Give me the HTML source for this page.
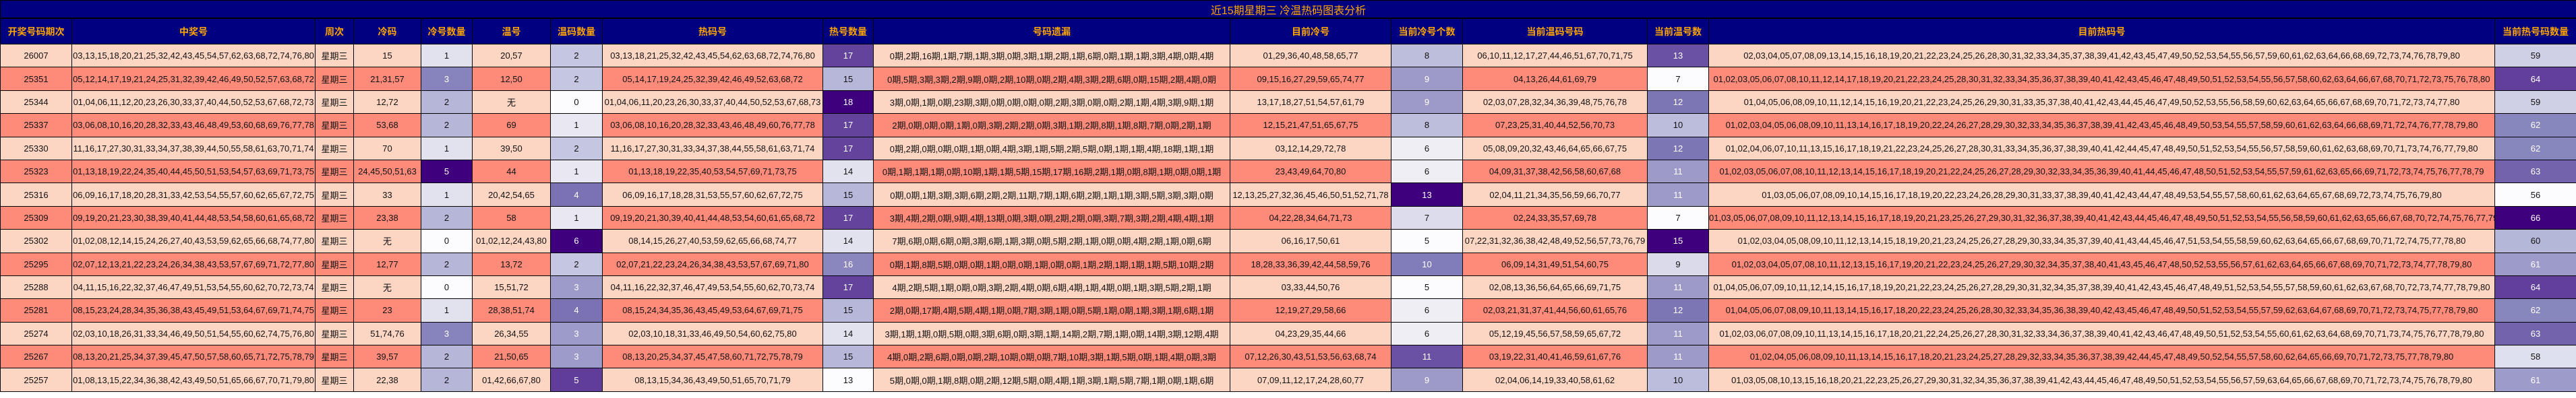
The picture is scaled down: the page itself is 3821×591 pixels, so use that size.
<!DOCTYPE html>
<html><head><meta charset="utf-8">
<style>
html,body{margin:0;padding:0;background:#fff;width:3821px;height:591px;overflow:hidden}
table{border-collapse:collapse;table-layout:fixed;width:3821px;font-family:"Liberation Sans","Noto Sans CJK SC",sans-serif;font-size:13px;color:#111}
td{border:1px solid #000;text-align:center;vertical-align:middle;padding:0;white-space:nowrap;overflow:hidden}
.t td{background:#000080;color:#ffa500;font-size:16px;height:25px;border-bottom:2px solid #000}
.h td{background:#000080;color:#ffa500;font-weight:bold;font-size:14px;height:37px}
tr.r td{height:33.4px}
.a td{background:#fcd5c3}
.b td{background:#fe8a7a}
td.w{color:#fff}
</style></head><body>
<table>
<colgroup>
<col style="width:106px"><col style="width:361px"><col style="width:57px"><col style="width:100px"><col style="width:76px"><col style="width:116px"><col style="width:77px"><col style="width:327px"><col style="width:75px"><col style="width:529px"><col style="width:239px"><col style="width:106px"><col style="width:274px"><col style="width:91px"><col style="width:1166px"><col style="width:121px">
</colgroup>
<tr class="t"><td colspan="16">近15期星期三 冷温热码图表分析</td></tr>
<tr class="h"><td>开奖号码期次</td><td>中奖号</td><td>周次</td><td>冷码</td><td>冷号数量</td><td>温号</td><td>温码数量</td><td>热码号</td><td>热号数量</td><td>号码遗漏</td><td>目前冷号</td><td>当前冷号个数</td><td>当前温码号码</td><td>当前温号数</td><td>目前热码号</td><td>当前热号码数量</td></tr>

<tr class="r a"><td>26007</td><td>03,13,15,18,20,21,25,32,42,43,45,54,57,62,63,68,72,74,76,80</td><td>星期三</td><td>15</td><td style="background:#e2e2ef">1</td><td>20,57</td><td style="background:#c5c6e1">2</td><td>03,13,18,21,25,32,42,43,45,54,62,63,68,72,74,76,80</td><td class="w" style="background:#63439c">17</td><td>0期,2期,16期,1期,7期,1期,3期,0期,3期,1期,2期,1期,6期,0期,1期,1期,3期,4期,0期,4期</td><td>01,29,36,40,48,58,65,77</td><td style="background:#bdbddc">8</td><td>06,10,11,12,17,27,44,46,51,67,70,71,75</td><td class="w" style="background:#6a51a3">13</td><td>02,03,04,05,07,08,09,13,14,15,16,18,19,20,21,22,23,24,25,26,28,30,31,32,33,34,35,37,38,39,41,42,43,45,47,49,50,52,53,54,55,56,57,59,60,61,62,63,64,66,68,69,72,73,74,76,78,79,80</td><td style="background:#cfd0e6">59</td></tr>

<tr class="r b"><td>25351</td><td>05,12,14,17,19,21,24,25,31,32,39,42,46,49,50,52,57,63,68,72</td><td>星期三</td><td>21,31,57</td><td class="w" style="background:#8784bd">3</td><td>12,50</td><td style="background:#c5c6e1">2</td><td>05,14,17,19,24,25,32,39,42,46,49,52,63,68,72</td><td style="background:#b7b7d9">15</td><td>0期,5期,3期,3期,2期,9期,0期,2期,10期,0期,2期,4期,3期,2期,6期,0期,15期,2期,4期,0期</td><td>09,15,16,27,29,59,65,74,77</td><td class="w" style="background:#9e9ac8">9</td><td>04,13,26,44,61,69,79</td><td style="background:#fcfbfd">7</td><td>01,02,03,05,06,07,08,10,11,12,14,17,18,19,20,21,22,23,24,25,28,30,31,32,33,34,35,36,37,38,39,40,41,42,43,45,46,47,48,49,50,51,52,53,54,55,56,57,58,60,62,63,64,66,67,68,70,71,72,73,75,76,78,80</td><td class="w" style="background:#623f9b">64</td></tr>

<tr class="r a"><td>25344</td><td>01,04,06,11,12,20,23,26,30,33,37,40,44,50,52,53,67,68,72,73</td><td>星期三</td><td>12,72</td><td style="background:#b5b6d8">2</td><td>无</td><td style="background:#fcfbfd">0</td><td>01,04,06,11,20,23,26,30,33,37,40,44,50,52,53,67,68,73</td><td class="w" style="background:#3f007d">18</td><td>3期,0期,1期,0期,23期,3期,0期,0期,0期,0期,2期,3期,0期,0期,2期,1期,4期,3期,9期,1期</td><td>13,17,18,27,51,54,57,61,79</td><td class="w" style="background:#9e9ac8">9</td><td>02,03,07,28,32,34,36,39,48,75,76,78</td><td class="w" style="background:#7d76b5">12</td><td>01,04,05,06,08,09,10,11,12,14,15,16,19,20,21,22,23,24,25,26,29,30,31,33,35,37,38,40,41,42,43,44,45,46,47,49,50,52,53,55,56,58,59,60,62,63,64,65,66,67,68,69,70,71,72,73,74,77,80</td><td style="background:#cfd0e6">59</td></tr>

<tr class="r b"><td>25337</td><td>03,06,08,10,16,20,28,32,33,43,46,48,49,53,60,68,69,76,77,78</td><td>星期三</td><td>53,68</td><td style="background:#b5b6d8">2</td><td>69</td><td style="background:#e9e8f2">1</td><td>03,06,08,10,16,20,28,32,33,43,46,48,49,60,76,77,78</td><td class="w" style="background:#63439c">17</td><td>2期,0期,0期,0期,1期,0期,3期,2期,2期,0期,3期,1期,2期,8期,1期,8期,7期,0期,2期,1期</td><td>12,15,21,47,51,65,67,75</td><td style="background:#bdbddc">8</td><td>07,23,25,31,40,44,52,56,70,73</td><td style="background:#bcbddc">10</td><td>01,02,03,04,05,06,08,09,10,11,13,14,16,17,18,19,20,22,24,26,27,28,29,30,32,33,34,35,36,37,38,39,41,42,43,45,46,48,49,50,53,54,55,57,58,59,60,61,62,63,64,66,68,69,71,72,74,76,77,78,79,80</td><td class="w" style="background:#8786bd">62</td></tr>

<tr class="r a"><td>25330</td><td>11,16,17,27,30,31,33,34,37,38,39,44,50,55,58,61,63,70,71,74</td><td>星期三</td><td>70</td><td style="background:#e2e2ef">1</td><td>39,50</td><td style="background:#c5c6e1">2</td><td>11,16,17,27,30,31,33,34,37,38,44,55,58,61,63,71,74</td><td class="w" style="background:#63439c">17</td><td>0期,2期,0期,0期,0期,1期,0期,4期,3期,1期,5期,2期,5期,0期,1期,1期,4期,18期,1期,1期</td><td>03,12,14,29,72,78</td><td style="background:#efeef5">6</td><td>05,08,09,20,32,43,46,64,65,66,67,75</td><td class="w" style="background:#7d76b5">12</td><td>01,02,04,06,07,10,11,13,15,16,17,18,19,21,22,23,24,25,26,27,28,30,31,33,34,35,36,37,38,39,40,41,42,44,45,47,48,49,50,51,52,53,54,55,56,57,58,59,60,61,62,63,68,69,70,71,73,74,76,77,79,80</td><td class="w" style="background:#8786bd">62</td></tr>

<tr class="r b"><td>25323</td><td>01,13,18,19,22,24,35,40,44,45,50,51,53,54,57,63,69,71,73,75</td><td>星期三</td><td>24,45,50,51,63</td><td class="w" style="background:#3f007d">5</td><td>44</td><td style="background:#e9e8f2">1</td><td>01,13,18,19,22,35,40,53,54,57,69,71,73,75</td><td style="background:#e2e2ef">14</td><td>0期,1期,1期,1期,0期,10期,1期,1期,5期,15期,17期,16期,2期,1期,0期,8期,1期,0期,0期,1期</td><td>23,43,49,64,70,80</td><td style="background:#efeef5">6</td><td>04,09,31,37,38,42,56,58,60,67,68</td><td class="w" style="background:#9e9ac8">11</td><td>01,02,03,05,06,07,08,10,11,12,13,14,15,16,17,18,19,20,21,22,24,25,26,27,28,29,30,32,33,34,35,36,39,40,41,44,45,46,47,48,50,51,52,53,54,55,57,59,61,62,63,65,66,69,71,72,73,74,75,76,77,78,79</td><td class="w" style="background:#7263ac">63</td></tr>

<tr class="r a"><td>25316</td><td>06,09,16,17,18,20,28,31,33,42,53,54,55,57,60,62,65,67,72,75</td><td>星期三</td><td>33</td><td style="background:#e2e2ef">1</td><td>20,42,54,65</td><td class="w" style="background:#7a72b3">4</td><td>06,09,16,17,18,28,31,53,55,57,60,62,67,72,75</td><td style="background:#b7b7d9">15</td><td>0期,0期,1期,3期,3期,6期,2期,2期,11期,7期,1期,6期,2期,1期,1期,3期,5期,3期,3期,0期</td><td>12,13,25,27,32,36,45,46,50,51,52,71,78</td><td class="w" style="background:#3f007d">13</td><td>02,04,11,21,34,35,56,59,66,70,77</td><td class="w" style="background:#9e9ac8">11</td><td>01,03,05,06,07,08,09,10,14,15,16,17,18,19,20,22,23,24,26,28,29,30,31,33,37,38,39,40,41,42,43,44,47,48,49,53,54,55,57,58,60,61,62,63,64,65,67,68,69,72,73,74,75,76,79,80</td><td style="background:#fcfbfd">56</td></tr>

<tr class="r b"><td>25309</td><td>09,19,20,21,23,30,38,39,40,41,44,48,53,54,58,60,61,65,68,72</td><td>星期三</td><td>23,38</td><td style="background:#b5b6d8">2</td><td>58</td><td style="background:#e9e8f2">1</td><td>09,19,20,21,30,39,40,41,44,48,53,54,60,61,65,68,72</td><td class="w" style="background:#63439c">17</td><td>3期,4期,2期,0期,9期,4期,13期,0期,3期,0期,2期,2期,0期,3期,7期,3期,2期,4期,4期,1期</td><td>04,22,28,34,64,71,73</td><td style="background:#dcdcec">7</td><td>02,24,33,35,57,69,78</td><td style="background:#fcfbfd">7</td><td>01,03,05,06,07,08,09,10,11,12,13,14,15,16,17,18,19,20,21,23,25,26,27,29,30,31,32,36,37,38,39,40,41,42,43,44,45,46,47,48,49,50,51,52,53,54,55,56,58,59,60,61,62,63,65,66,67,68,70,72,74,75,76,77,79,80</td><td class="w" style="background:#3f007d">66</td></tr>

<tr class="r a"><td>25302</td><td>01,02,08,12,14,15,24,26,27,40,43,53,59,62,65,66,68,74,77,80</td><td>星期三</td><td>无</td><td style="background:#fcfbfd">0</td><td>01,02,12,24,43,80</td><td class="w" style="background:#3f007d">6</td><td>08,14,15,26,27,40,53,59,62,65,66,68,74,77</td><td style="background:#e2e2ef">14</td><td>7期,6期,0期,6期,0期,3期,6期,1期,3期,0期,5期,2期,1期,0期,0期,4期,2期,1期,0期,6期</td><td>06,16,17,50,61</td><td style="background:#fcfbfd">5</td><td>07,22,31,32,36,38,42,48,49,52,56,57,73,76,79</td><td class="w" style="background:#3f007d">15</td><td>01,02,03,04,05,08,09,10,11,12,13,14,15,18,19,20,21,23,24,25,26,27,28,29,30,33,34,35,37,39,40,41,43,44,45,46,47,51,53,54,55,58,59,60,62,63,64,65,66,67,68,69,70,71,72,74,75,77,78,80</td><td style="background:#b5b7d8">60</td></tr>

<tr class="r b"><td>25295</td><td>02,07,12,13,21,22,23,24,26,34,38,43,53,57,67,69,71,72,77,80</td><td>星期三</td><td>12,77</td><td style="background:#b5b6d8">2</td><td>13,72</td><td style="background:#c5c6e1">2</td><td>02,07,21,22,23,24,26,34,38,43,53,57,67,69,71,80</td><td class="w" style="background:#8a87be">16</td><td>0期,1期,8期,5期,0期,0期,1期,0期,0期,1期,0期,0期,1期,2期,1期,1期,1期,5期,10期,2期</td><td>18,28,33,36,39,42,44,58,59,76</td><td class="w" style="background:#807dba">10</td><td>06,09,14,31,49,51,54,60,75</td><td style="background:#dadaeb">9</td><td>01,02,03,04,05,07,08,10,11,12,13,15,16,17,19,20,21,22,23,24,25,26,27,29,30,32,34,35,37,38,40,41,43,45,46,47,48,50,52,53,55,56,57,61,62,63,64,65,66,67,68,69,70,71,72,73,74,77,78,79,80</td><td class="w" style="background:#9c9bc9">61</td></tr>

<tr class="r a"><td>25288</td><td>04,11,15,16,22,32,37,46,47,49,51,53,54,55,60,62,70,72,73,74</td><td>星期三</td><td>无</td><td style="background:#fcfbfd">0</td><td>15,51,72</td><td class="w" style="background:#9d9bc9">3</td><td>04,11,16,22,32,37,46,47,49,53,54,55,60,62,70,73,74</td><td class="w" style="background:#63439c">17</td><td>4期,2期,5期,1期,0期,0期,3期,2期,4期,0期,6期,4期,1期,4期,0期,1期,3期,5期,2期,1期</td><td>03,33,44,50,76</td><td style="background:#fcfbfd">5</td><td>02,08,13,36,56,64,65,66,69,71,75</td><td class="w" style="background:#9e9ac8">11</td><td>01,04,05,06,07,09,10,11,12,14,15,16,17,18,19,20,21,22,23,24,25,26,27,28,29,30,31,32,34,35,37,38,39,40,41,42,43,45,46,47,48,49,51,52,53,54,55,57,58,59,60,61,62,63,67,68,70,72,73,74,77,78,79,80</td><td class="w" style="background:#623f9b">64</td></tr>

<tr class="r b"><td>25281</td><td>08,15,23,24,28,34,35,36,38,43,45,49,51,53,64,67,69,71,74,75</td><td>星期三</td><td>23</td><td style="background:#e2e2ef">1</td><td>28,38,51,74</td><td class="w" style="background:#7a72b3">4</td><td>08,15,24,34,35,36,43,45,49,53,64,67,69,71,75</td><td style="background:#b7b7d9">15</td><td>2期,0期,17期,4期,5期,4期,1期,0期,7期,3期,1期,0期,5期,1期,0期,1期,3期,1期,6期,1期</td><td>12,19,27,29,58,66</td><td style="background:#efeef5">6</td><td>02,03,21,31,37,41,44,56,60,61,65,76</td><td class="w" style="background:#7d76b5">12</td><td>01,04,05,06,07,08,09,10,11,13,14,15,16,17,18,20,22,23,24,25,26,28,30,32,33,34,35,36,38,39,40,42,43,45,46,47,48,49,50,51,52,53,54,55,57,59,62,63,64,67,68,69,70,71,72,73,74,75,77,78,79,80</td><td class="w" style="background:#8786bd">62</td></tr>

<tr class="r a"><td>25274</td><td>02,03,10,18,26,31,33,34,46,49,50,51,54,55,60,62,74,75,76,80</td><td>星期三</td><td>51,74,76</td><td class="w" style="background:#8784bd">3</td><td>26,34,55</td><td class="w" style="background:#9d9bc9">3</td><td>02,03,10,18,31,33,46,49,50,54,60,62,75,80</td><td style="background:#e2e2ef">14</td><td>3期,1期,1期,0期,5期,0期,3期,6期,0期,3期,1期,14期,2期,7期,1期,0期,14期,3期,12期,4期</td><td>04,23,29,35,44,66</td><td style="background:#efeef5">6</td><td>05,12,19,45,56,57,58,59,65,67,72</td><td class="w" style="background:#9e9ac8">11</td><td>01,02,03,06,07,08,09,10,11,13,14,15,16,17,18,20,21,22,24,25,26,27,28,30,31,32,33,34,36,37,38,39,40,41,42,43,46,47,48,49,50,51,52,53,54,55,60,61,62,63,64,68,69,70,71,73,74,75,76,77,78,79,80</td><td class="w" style="background:#7263ac">63</td></tr>

<tr class="r b"><td>25267</td><td>08,13,20,21,25,34,37,39,45,47,50,57,58,60,65,71,72,75,78,79</td><td>星期三</td><td>39,57</td><td style="background:#b5b6d8">2</td><td>21,50,65</td><td class="w" style="background:#9d9bc9">3</td><td>08,13,20,25,34,37,45,47,58,60,71,72,75,78,79</td><td style="background:#b7b7d9">15</td><td>4期,0期,2期,6期,0期,0期,2期,10期,0期,0期,7期,10期,3期,1期,5期,0期,1期,4期,0期,3期</td><td>07,12,26,30,43,51,53,56,63,68,74</td><td class="w" style="background:#6a51a3">11</td><td>03,19,22,31,40,41,46,59,61,67,76</td><td class="w" style="background:#9e9ac8">11</td><td>01,02,04,05,06,08,09,10,11,13,14,15,16,17,18,20,21,23,24,25,27,28,29,32,33,34,35,36,37,38,39,42,44,45,47,48,49,50,52,54,55,57,58,60,62,64,65,66,69,70,71,72,73,75,77,78,79,80</td><td style="background:#dfe0ef">58</td></tr>

<tr class="r a"><td>25257</td><td>01,08,13,15,22,34,36,38,42,43,49,50,51,65,66,67,70,71,79,80</td><td>星期三</td><td>22,38</td><td style="background:#b5b6d8">2</td><td>01,42,66,67,80</td><td class="w" style="background:#5f3d99">5</td><td>08,13,15,34,36,43,49,50,51,65,70,71,79</td><td style="background:#fcfbfd">13</td><td>5期,0期,0期,1期,8期,0期,2期,12期,5期,0期,4期,1期,3期,1期,5期,7期,1期,0期,1期,6期</td><td>07,09,11,12,17,24,28,60,77</td><td class="w" style="background:#9e9ac8">9</td><td>02,04,06,14,19,33,40,58,61,62</td><td style="background:#bcbddc">10</td><td>01,03,05,08,10,13,15,16,18,20,21,22,23,25,26,27,29,30,31,32,34,35,36,37,38,39,41,42,43,44,45,46,47,48,49,50,51,52,53,54,55,56,57,59,63,64,65,66,67,68,69,70,71,72,73,74,75,76,78,79,80</td><td class="w" style="background:#9c9bc9">61</td></tr>
</table>
</body></html>
